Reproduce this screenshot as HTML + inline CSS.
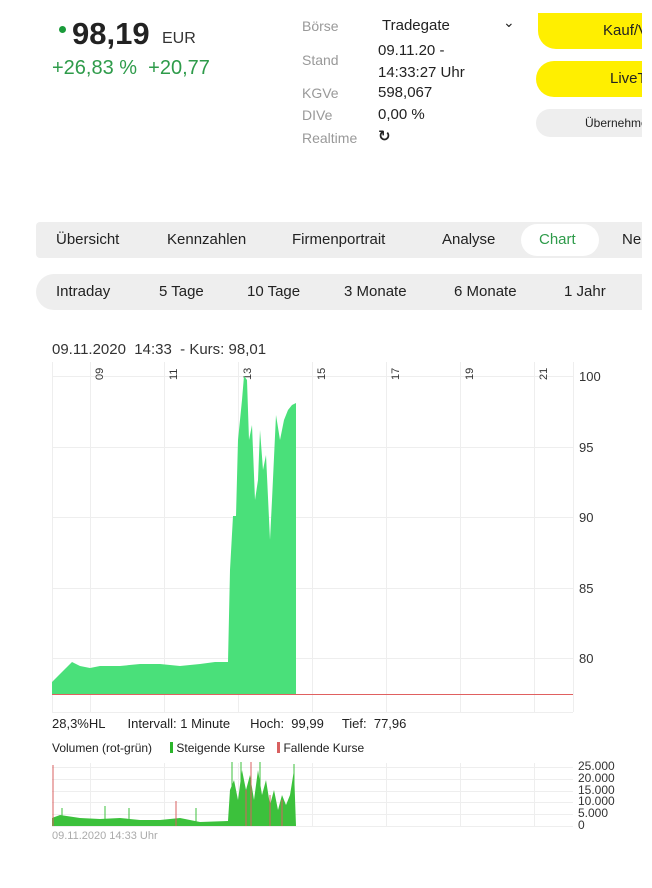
<!DOCTYPE html>
<html><head><meta charset="utf-8"><style>
body{margin:0;width:652px;height:888px;background:#fff;font-family:"Liberation Sans","DejaVu Sans",sans-serif;position:relative;overflow:hidden;color:#222}
.a{position:absolute;white-space:nowrap}
.lbl{color:#999;font-size:14px}
.val{color:#222;font-size:15px}
.tab{font-size:15px;color:#222}
.btn{overflow:hidden}
</style></head><body>
<div class="a" style="left:59px;top:26px;width:7px;height:7px;border-radius:50%;background:#1a9b3a"></div>
<div class="a" style="left:72px;top:16px;font-size:31px;font-weight:bold;color:#222">98,19</div>
<div class="a" style="left:162px;top:30px;font-size:16px;color:#333">EUR</div>
<div class="a" style="left:52px;top:57px;font-size:20px;color:#2e9b4a">+26,83 %&nbsp;&nbsp;+20,77</div>

<div class="a lbl" style="left:302px;top:18px">Börse</div>
<div class="a val" style="left:382px;top:17px">Tradegate</div>
<div class="a" style="left:503px;top:14px;font-size:14px">⌄</div>
<div class="a lbl" style="left:302px;top:52px">Stand</div>
<div class="a val" style="left:378px;top:40px;line-height:22px">09.11.20 -<br>14:33:27 Uhr</div>
<div class="a lbl" style="left:302px;top:85px">KGVe</div>
<div class="a val" style="left:378px;top:84px">598,067</div>
<div class="a lbl" style="left:302px;top:107px">DIVe</div>
<div class="a val" style="left:378px;top:106px">0,00 %</div>
<div class="a lbl" style="left:302px;top:130px">Realtime</div>
<div class="a" style="left:378px;top:127px;font-size:15px;font-weight:bold">↻</div>

<div class="a btn" style="left:538px;top:13px;width:104px;height:36px;background:#ffef00;border-radius:0 0 0 18px"><span class="a" style="left:65px;top:9px;font-size:15px">Kauf/Verkauf</span></div>
<div class="a btn" style="left:536px;top:61px;width:106px;height:36px;background:#ffef00;border-radius:18px 0 0 18px"><span class="a" style="left:74px;top:9px;font-size:15px">LiveTrading</span></div>
<div class="a btn" style="left:536px;top:109px;width:106px;height:28px;background:#eee;border-radius:14px 0 0 14px"><span class="a" style="left:49px;top:7px;font-size:12px">Übernehmen</span></div>

<div class="a" style="left:36px;top:222px;width:606px;height:36px;background:#eee;border-radius:4px 0 0 4px"></div>
<div class="a" style="left:521px;top:224px;width:78px;height:32px;background:#fff;border-radius:16px"></div>
<div class="a tab" style="left:56px;top:231px">Übersicht</div>
<div class="a tab" style="left:167px;top:231px">Kennzahlen</div>
<div class="a tab" style="left:292px;top:231px">Firmenportrait</div>
<div class="a tab" style="left:442px;top:231px">Analyse</div>
<div class="a tab" style="left:539px;top:231px;color:#2e9b4a">Chart</div>
<div class="a tab" style="left:622px;top:231px">Ne</div>

<div class="a" style="left:36px;top:274px;width:606px;height:36px;background:#eee;border-radius:18px 0 0 18px"></div>
<div class="a tab" style="left:56px;top:283px">Intraday</div>
<div class="a tab" style="left:159px;top:283px">5 Tage</div>
<div class="a tab" style="left:247px;top:283px">10 Tage</div>
<div class="a tab" style="left:344px;top:283px">3 Monate</div>
<div class="a tab" style="left:454px;top:283px">6 Monate</div>
<div class="a tab" style="left:564px;top:283px">1 Jahr</div>

<div class="a" style="left:52px;top:341px;font-size:15px;color:#333">09.11.2020&nbsp; 14:33&nbsp; - Kurs: 98,01</div>

<svg class="a" style="left:0;top:360px" width="652" height="480" viewBox="0 360 652 480">
<g stroke="#eee" stroke-width="1">
<line x1="90.5" y1="362" x2="90.5" y2="712"/><line x1="164.5" y1="362" x2="164.5" y2="712"/><line x1="238.5" y1="362" x2="238.5" y2="712"/><line x1="312.5" y1="362" x2="312.5" y2="712"/><line x1="386.5" y1="362" x2="386.5" y2="712"/><line x1="460.5" y1="362" x2="460.5" y2="712"/><line x1="534.5" y1="362" x2="534.5" y2="712"/>
<line x1="52" y1="376.5" x2="573" y2="376.5"/><line x1="52" y1="447.5" x2="573" y2="447.5"/><line x1="52" y1="517.5" x2="573" y2="517.5"/><line x1="52" y1="588.5" x2="573" y2="588.5"/><line x1="52" y1="658.5" x2="573" y2="658.5"/><line x1="52" y1="712.5" x2="573" y2="712.5"/>
<line x1="573.5" y1="362" x2="573.5" y2="712"/><line x1="52.5" y1="362" x2="52.5" y2="712"/>
</g>
<g font-size="11" fill="#333">
<text transform="translate(103,380) rotate(-90)">09</text><text transform="translate(177,380) rotate(-90)">11</text><text transform="translate(251,380) rotate(-90)">13</text><text transform="translate(325,380) rotate(-90)">15</text><text transform="translate(399,380) rotate(-90)">17</text><text transform="translate(473,380) rotate(-90)">19</text><text transform="translate(547,380) rotate(-90)">21</text>
</g>
<g font-size="13" fill="#333"><text x="579" y="381">100</text><text x="579" y="452">95</text><text x="579" y="522">90</text><text x="579" y="593">85</text><text x="579" y="663">80</text></g>
<polygon fill="#4ae07a" points="52,694 52,682 58,676 66,668 72,662 80,666 90,668 100,666 120,666 140,664 160,664 180,666 200,664 215,662 228,662 230,570 233,516 236,516 238,440 242,400 244,376 247,380 249,440 252,425 255,500 258,480 260,430 263,470 266,455 270,540 272,500 276,415 280,440 284,420 288,410 292,405 296,403 296,694"/>
<line x1="52" y1="694.5" x2="573" y2="694.5" stroke="#e06060" stroke-width="1"/>
<g stroke="#eee"><line x1="90.5" y1="763" x2="90.5" y2="826"/><line x1="164.5" y1="763" x2="164.5" y2="826"/><line x1="238.5" y1="763" x2="238.5" y2="826"/><line x1="312.5" y1="763" x2="312.5" y2="826"/><line x1="386.5" y1="763" x2="386.5" y2="826"/><line x1="460.5" y1="763" x2="460.5" y2="826"/><line x1="534.5" y1="763" x2="534.5" y2="826"/>
<line x1="52" y1="767.5" x2="573" y2="767.5"/><line x1="52" y1="779.5" x2="573" y2="779.5"/><line x1="52" y1="791.5" x2="573" y2="791.5"/><line x1="52" y1="802.5" x2="573" y2="802.5"/><line x1="52" y1="814.5" x2="573" y2="814.5"/><line x1="52" y1="826.5" x2="573" y2="826.5"/></g>
<polygon fill="#3cc13c" points="52,826 52,818 60,815 80,818 100,819 120,818 140,820 160,820 180,818 200,822 228,821 230,790 234,780 238,800 242,770 246,790 250,775 254,800 258,770 262,795 266,780 270,805 274,790 278,810 282,795 286,805 290,795 294,770 296,826"/>
<g stroke="#3cc13c"><line x1="62" y1="826" x2="62" y2="808"/><line x1="105" y1="826" x2="105" y2="806"/><line x1="129" y1="826" x2="129" y2="808"/><line x1="196" y1="826" x2="196" y2="808"/><line x1="232" y1="826" x2="232" y2="762"/><line x1="241" y1="826" x2="241" y2="762"/><line x1="260" y1="826" x2="260" y2="762"/><line x1="294" y1="826" x2="294" y2="764"/></g>
<g stroke="#d86060"><line x1="53" y1="826" x2="53" y2="765"/><line x1="176" y1="826" x2="176" y2="801"/><line x1="251" y1="826" x2="251" y2="762"/><line x1="246" y1="826" x2="246" y2="790"/><line x1="270" y1="826" x2="270" y2="795"/><line x1="282" y1="826" x2="282" y2="800"/></g>
<g font-size="12" fill="#333"><text x="578" y="770">25.000</text><text x="578" y="782">20.000</text><text x="578" y="794">15.000</text><text x="578" y="805">10.000</text><text x="578" y="817">5.000</text><text x="578" y="829">0</text></g>
</svg>
<div class="a" style="left:52px;top:716px;font-size:13px;color:#222">28,3%HL<span style="margin-left:22px">Intervall: 1 Minute</span><span style="margin-left:20px">Hoch:&nbsp; 99,99</span><span style="margin-left:18px">Tief:&nbsp; 77,96</span></div>
<div class="a" style="left:52px;top:741px;font-size:12px;color:#222">Volumen (rot-grün)<span style="margin-left:18px;display:inline-block;width:3px;height:11px;background:#2bb52b;vertical-align:-1px"></span> Steigende Kurse<span style="margin-left:12px;display:inline-block;width:3px;height:11px;background:#d86060;vertical-align:-1px"></span> Fallende Kurse</div>
<div class="a" style="left:52px;top:830px;font-size:11px;color:#aaa">09.11.2020 14:33 Uhr</div>
</body></html>
